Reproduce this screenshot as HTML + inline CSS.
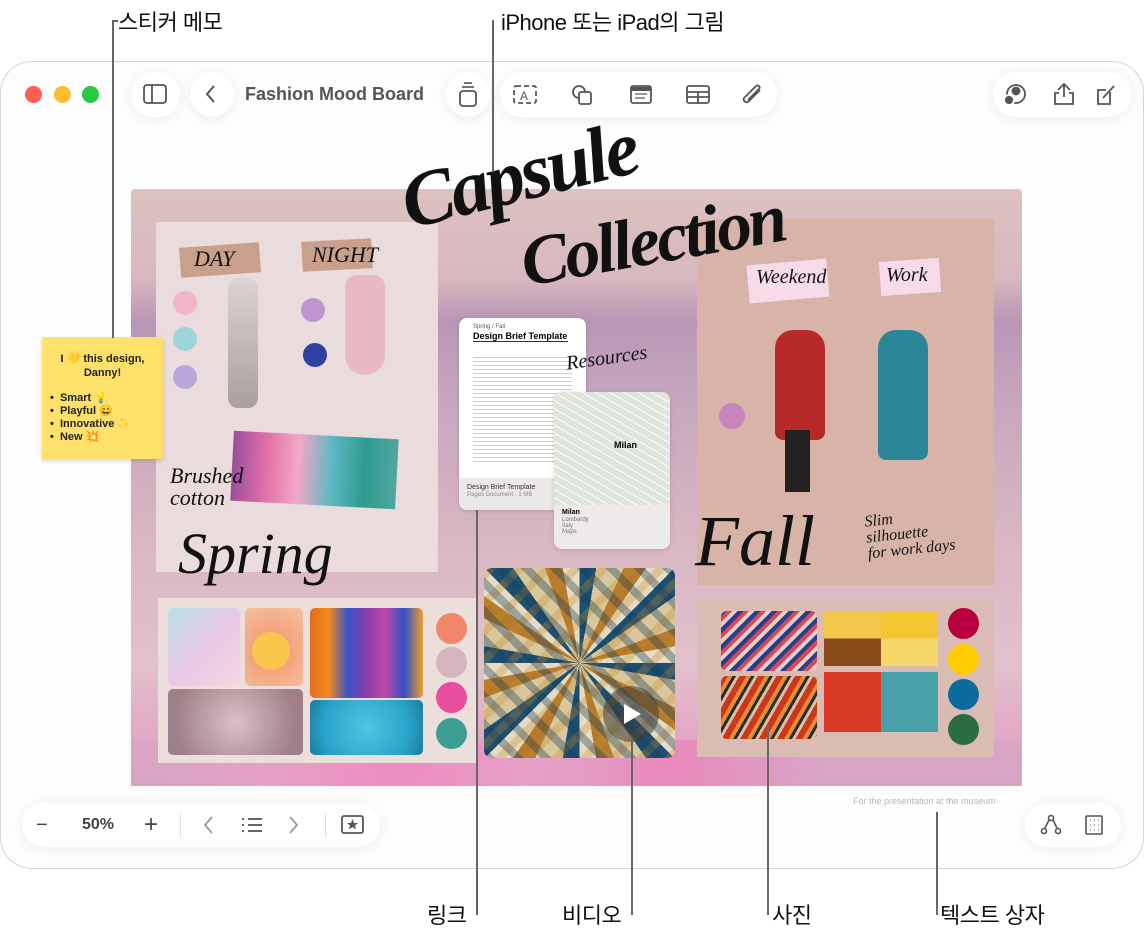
<!DOCTYPE html>
<html><head><meta charset="utf-8"><style>
*{margin:0;padding:0;box-sizing:border-box}
body{width:1144px;height:936px;background:#fff;position:relative;overflow:hidden;font-family:"Liberation Sans","Noto Sans CJK KR",sans-serif}
.a{position:absolute}
.win{left:0;top:61px;width:1144px;height:808px;border:1.5px solid #d4d4d4;border-radius:32px;background:#fdfdfd}
.btn{background:#fff;border-radius:24px;box-shadow:0 2px 14px rgba(0,0,0,.07)}
.lbl{font-size:22px;color:#111;letter-spacing:-.5px}
.ln{background:#666;width:1.5px}
.hw{font-family:"Liberation Serif",serif;font-style:italic;font-weight:bold;color:#111}
.c{border-radius:50%}
svg{position:absolute}
</style></head><body>
<div class="a win"></div>
<div class="a c" style="left:25px;top:86px;width:17px;height:17px;background:#fe5f57"></div>
<div class="a c" style="left:54px;top:86px;width:17px;height:17px;background:#febc2e"></div>
<div class="a c" style="left:82px;top:86px;width:17px;height:17px;background:#28c840"></div>
<div class="a btn" style="left:131px;top:72px;width:49px;height:45px"></div>
<svg style="left:143px;top:84px" width="24" height="20"><rect x="1" y="1" width="22" height="18" rx="3" fill="none" stroke="#555" stroke-width="1.8"/><line x1="9" y1="1" x2="9" y2="19" stroke="#555" stroke-width="1.8"/></svg>
<div class="a btn" style="left:190px;top:72px;width:44px;height:45px"></div>
<svg style="left:204px;top:84px" width="14" height="20"><path d="M10 2 L3 10 L10 18" fill="none" stroke="#555" stroke-width="2"/></svg>
<div class="a" style="left:245px;top:84px;font-size:18px;font-weight:bold;color:#555">Fashion Mood Board</div>
<div class="a btn" style="left:446px;top:72px;width:44px;height:45px"></div>
<svg style="left:458px;top:81px" width="20" height="26"><line x1="6" y1="2" x2="14" y2="2" stroke="#555" stroke-width="1.6"/><line x1="4" y1="6" x2="16" y2="6" stroke="#555" stroke-width="1.6"/><rect x="2" y="10" width="16" height="15" rx="3" fill="none" stroke="#555" stroke-width="1.8"/></svg>
<div class="a btn" style="left:500px;top:72px;width:277px;height:45px"></div>
<svg style="left:512px;top:84px" width="260" height="22" fill="none" stroke="#555" stroke-width="1.8">
<rect x="2" y="2" width="22" height="17" rx="2" stroke-dasharray="5 3"/><text x="8" y="16" font-size="12" fill="#555" stroke="none" font-family="Liberation Sans">A</text>
<circle cx="67" cy="8" r="6"/><rect x="67" y="8" width="12" height="12" rx="2" fill="#fff"/>
<rect x="119" y="2" width="20" height="17" rx="2"/><line x1="119" y1="5" x2="139" y2="5" stroke-width="4"/><line x1="123" y1="10" x2="135" y2="10" stroke-width="1.2"/><line x1="123" y1="14" x2="133" y2="14" stroke-width="1.2"/>
<rect x="175" y="2" width="22" height="17" rx="2"/><line x1="175" y1="8" x2="197" y2="8"/><line x1="175" y1="13" x2="197" y2="13"/><line x1="186" y1="8" x2="186" y2="19"/>
<path d="M248 6 L236 18 a3 3 0 0 1 -4 -4 L244 2 a2 2 0 0 1 3 3 L236 16"/>
</svg>
<div class="a btn" style="left:993px;top:72px;width:138px;height:45px"></div>
<svg style="left:1002px;top:82px" width="120" height="24" fill="none" stroke="#555" stroke-width="1.8">
<circle cx="14" cy="12" r="9"/><circle cx="14" cy="9" r="3.5" fill="#555"/><circle cx="7" cy="18" r="5" fill="#555" stroke="#fff"/>
<path d="M56 8 L62 2 L68 8 M62 2 L62 15 M57 11 L53 11 L53 22 L71 22 L71 11 L67 11"/>
<path d="M108 10 L108 22 L96 22 L96 8 L104 8 M101 16 L112 4"/>
</svg>

<!-- board -->
<div class="a" style="left:131px;top:189px;width:891px;height:597px;border-radius:4px;background:linear-gradient(180deg,#dcc2c0 0%,#d8b8bf 15%,#b996b6 22%,#c6a6bd 35%,#d9b7c3 60%,#e2c0cc 80%,#e2a7c4 92%,#d598bb 100%)"></div>
<div class="a" style="left:131px;top:740px;width:891px;height:46px;background:radial-gradient(circle at 30% 50%,#f08ac0 0,#e8a0c8 20%,transparent 40%),radial-gradient(circle at 60% 50%,#ec86bb 0,transparent 30%),#d9a6c6;opacity:.9"></div>
<div class="a" style="left:156px;top:222px;width:282px;height:350px;background:#eadcdc"></div>
<div class="a" style="left:697px;top:219px;width:297px;height:366px;background:#d8b4a8"></div>
<div class="a" style="left:158px;top:598px;width:318px;height:165px;background:#ebdedb"></div>
<div class="a" style="left:697px;top:600px;width:297px;height:157px;background:#dbbcb4"></div>

<div class="a" style="left:180px;top:245px;width:80px;height:30px;background:#c9a08c;transform:rotate(-4deg)"></div>
<div class="a" style="left:302px;top:240px;width:70px;height:30px;background:#c9a08c;transform:rotate(-3deg)"></div>
<div class="a hw" style="left:194px;top:246px;font-size:22px;font-weight:normal">DAY</div>
<div class="a hw" style="left:312px;top:242px;font-size:22px;font-weight:normal">NIGHT</div>
<div class="a c" style="left:173px;top:291px;width:24px;height:24px;background:#f4b4cc"></div>
<div class="a c" style="left:173px;top:327px;width:24px;height:24px;background:#9fd4d8"></div>
<div class="a c" style="left:173px;top:365px;width:24px;height:24px;background:#b7a8d9"></div>
<div class="a c" style="left:301px;top:298px;width:24px;height:24px;background:#c094d0"></div>
<div class="a c" style="left:303px;top:343px;width:24px;height:24px;background:#2e41a0"></div>
<div class="a" style="left:228px;top:278px;width:30px;height:130px;background:linear-gradient(#d8d0d0,#9a9090);border-radius:10px;opacity:.8"></div>
<div class="a" style="left:345px;top:275px;width:40px;height:100px;background:#e8b8c4;border-radius:12px 12px 20px 20px"></div>
<div class="a" style="left:232px;top:435px;width:165px;height:70px;background:linear-gradient(90deg,#9a4d9e,#e06fa6,#f3a7c7,#5fb8c4,#2e9c8f,#4fa69e);transform:rotate(3deg)"></div>
<div class="a hw" style="left:170px;top:465px;font-size:22px;font-weight:normal;line-height:22px">Brushed<br>cotton</div>
<div class="a hw" style="left:178px;top:520px;font-size:58px;font-weight:normal">Spring</div>

<div class="a" style="left:168px;top:608px;width:72px;height:78px;border-radius:5px;background:linear-gradient(135deg,#b9e0e8,#e6c8e6,#f5d6e0)"></div>
<div class="a" style="left:245px;top:608px;width:58px;height:78px;border-radius:5px;background:radial-gradient(circle at 45% 55%,#f7c64a 0,#f7c64a 35%,#f3a37e 36%,#f5c1a0 100%)"></div>
<div class="a" style="left:310px;top:608px;width:113px;height:90px;border-radius:5px;background:linear-gradient(90deg,#e56b1e,#f08a1e,#3a55c8,#8a3ca8,#c04aa8,#2f4fc6,#f0a02e)"></div>
<div class="a" style="left:168px;top:689px;width:135px;height:66px;border-radius:5px;background:radial-gradient(circle,#d9c0c8 0,#9f8088 80%)"></div>
<div class="a" style="left:310px;top:700px;width:113px;height:55px;border-radius:5px;background:radial-gradient(circle,#4fc4e0 0,#27a2c8 70%,#1c7a9a)"></div>
<div class="a c" style="left:436px;top:613px;width:31px;height:31px;background:#f0876a"></div>
<div class="a c" style="left:436px;top:647px;width:31px;height:31px;background:#d3b5bd"></div>
<div class="a c" style="left:436px;top:682px;width:31px;height:31px;background:#e84e9d"></div>
<div class="a c" style="left:436px;top:718px;width:31px;height:31px;background:#3e9d93"></div>

<div class="a" style="left:484px;top:568px;width:191px;height:190px;border-radius:8px;background:repeating-conic-gradient(from 45deg at 50% 50%,#1d4f70 0 10deg,#d9c79e 10deg 25deg,#b57a2c 25deg 35deg,#e6dcc4 35deg 45deg);"></div>
<div class="a" style="left:484px;top:568px;width:191px;height:190px;border-radius:8px;background:repeating-linear-gradient(45deg,rgba(20,60,90,.35) 0 8px,transparent 8px 20px),repeating-linear-gradient(-45deg,rgba(200,140,40,.3) 0 8px,transparent 8px 20px)"></div>
<div class="a c" style="left:603px;top:686px;width:56px;height:56px;background:rgba(60,60,60,.55)"></div>
<svg style="left:621px;top:702px" width="22" height="24"><path d="M3 2 L20 12 L3 22Z" fill="#fff"/></svg>

<div class="a" style="left:459px;top:318px;width:127px;height:192px;background:#fff;border-radius:8px;box-shadow:0 1px 4px rgba(0,0,0,.15);overflow:hidden">
<div style="font-size:6px;color:#555;margin:6px 0 0 14px">Spring / Fall</div>
<div style="font-size:9px;font-weight:bold;margin:1px 0 0 14px;border-bottom:1px solid #333;width:95px">Design Brief Template</div>
<div style="margin:12px 14px;height:110px;background:repeating-linear-gradient(#fff 0 3px,#ccc 3px 4px)"></div>
<div style="position:absolute;top:160px;left:0;width:127px;height:32px;background:#ece8e8;font-size:7px;padding:6px 8px;color:#333">Design Brief Template<br><span style="color:#888;font-size:6px">Pages Document · 1 MB</span></div>
</div>
<div class="a" style="left:554px;top:392px;width:116px;height:157px;background:#eeeaea;border-radius:8px;box-shadow:0 1px 4px rgba(0,0,0,.15);overflow:hidden">
<div style="height:113px;background:repeating-linear-gradient(30deg,#dfe6dc 0 6px,#fff 6px 7px),#e4ebe0;opacity:.95"></div>
<div style="position:absolute;left:60px;top:48px;font-size:9px;font-weight:bold">Milan</div>
<div style="font-size:7px;font-weight:bold;padding:4px 8px 0">Milan</div>
<div style="font-size:6px;color:#777;padding:1px 8px">Lombardy<br>Italy<br>Maps</div>
</div>
<div class="a hw" style="left:566px;top:347px;font-size:20px;font-weight:normal;transform:rotate(-8deg)">Resources</div>

<div class="a" style="left:748px;top:262px;width:80px;height:38px;background:#f7dbe8;transform:rotate(-5deg)"></div>
<div class="a" style="left:880px;top:260px;width:60px;height:34px;background:#f7dbe8;transform:rotate(-4deg)"></div>
<div class="a hw" style="left:756px;top:266px;font-size:20px;font-weight:normal">Weekend</div>
<div class="a hw" style="left:886px;top:264px;font-size:20px;font-weight:normal">Work</div>
<div class="a" style="left:775px;top:330px;width:50px;height:110px;background:#b82a2a;border-radius:18px 18px 8px 8px"></div>
<div class="a" style="left:785px;top:430px;width:25px;height:62px;background:#222"></div>
<div class="a" style="left:878px;top:330px;width:50px;height:130px;background:#2b8798;border-radius:18px 18px 8px 8px"></div>
<div class="a c" style="left:719px;top:403px;width:26px;height:26px;background:#c885bd"></div>
<div class="a hw" style="left:695px;top:500px;font-size:72px;font-weight:normal">Fall</div>
<div class="a hw" style="left:866px;top:510px;font-size:16px;font-weight:normal;line-height:16px;transform:rotate(-6deg)">Slim<br>silhouette<br>for work days</div>

<div class="a" style="left:721px;top:611px;width:96px;height:60px;border-radius:6px;background:repeating-linear-gradient(135deg,#2a3f8c 0 4px,#d34a5a 4px 8px,#e8d0c8 8px 12px)"></div>
<div class="a" style="left:721px;top:676px;width:96px;height:63px;border-radius:6px;background:repeating-linear-gradient(120deg,#c9371d 0 6px,#e98a35 6px 10px,#2a2a2a 10px 13px,#d9c0a0 13px 16px)"></div>
<div class="a" style="left:824px;top:611px;width:114px;height:55px;background:conic-gradient(#f2c531 0 25%,#f6d86a 0 50%,#8a4a1c 0 75%,#f3c84a 0)"></div>
<div class="a" style="left:824px;top:672px;width:114px;height:60px;background:linear-gradient(90deg,#d83a26 0 50%,#4aa0a8 50%)"></div>
<div class="a c" style="left:948px;top:608px;width:31px;height:31px;background:#b80041"></div>
<div class="a c" style="left:948px;top:644px;width:31px;height:31px;background:#ffcc00"></div>
<div class="a c" style="left:948px;top:679px;width:31px;height:31px;background:#0c6b9a"></div>
<div class="a c" style="left:948px;top:714px;width:31px;height:31px;background:#2a6c44"></div>

<div class="a hw" style="left:392px;top:160px;font-size:78px;transform:rotate(-14deg);letter-spacing:-3px;transform-origin:left top">Capsule</div>
<div class="a hw" style="left:515px;top:225px;font-size:70px;transform:rotate(-10deg);letter-spacing:-3px;transform-origin:left top">Collection</div>

<div class="a" style="left:42px;top:337px;width:121px;height:122px;background:#fde16a;box-shadow:0 2px 4px rgba(0,0,0,.15);font-size:11px;font-weight:bold;color:#222;padding:15px 8px">
<div style="text-align:center;line-height:14px">I 💛 this design,<br>Danny!</div>
<div style="margin-top:12px;line-height:13px">•&nbsp; Smart 💡<br>•&nbsp; Playful 😄<br>•&nbsp; Innovative ✨<br>•&nbsp; New 💥</div>
</div>

<div class="a" style="left:853px;top:796px;font-size:9px;color:#b8b8b8">For the presentation at the museum</div>

<div class="a btn" style="left:22px;top:803px;width:358px;height:44px"></div>
<div class="a" style="left:36px;top:814px;font-size:20px;color:#444">−</div>
<div class="a" style="left:82px;top:816px;font-size:16px;font-weight:bold;color:#444">50%</div>
<div class="a" style="left:144px;top:811px;font-size:24px;color:#444">+</div>
<div class="a" style="left:180px;top:813px;width:1px;height:24px;background:#ddd"></div>
<div class="a" style="left:325px;top:813px;width:1px;height:24px;background:#ddd"></div>
<svg style="left:200px;top:815px" width="110" height="20" fill="none" stroke-width="1.8"><path d="M12 2 L5 10 L12 18" stroke="#999"/><path d="M90 2 L97 10 L90 18" stroke="#999"/><g stroke="#555"><line x1="48" y1="4" x2="62" y2="4"/><line x1="48" y1="10" x2="62" y2="10"/><line x1="48" y1="16" x2="62" y2="16"/><line x1="42" y1="4" x2="44" y2="4"/><line x1="42" y1="10" x2="44" y2="10"/><line x1="42" y1="16" x2="44" y2="16"/></g></svg>
<svg style="left:341px;top:815px" width="24" height="20"><rect x="1" y="1" width="21" height="17" rx="2" fill="none" stroke="#555" stroke-width="1.8"/><path d="M11.5 4 L13 8 L17 8 L14 10.5 L15 14.5 L11.5 12 L8 14.5 L9 10.5 L6 8 L10 8Z" fill="#555"/></svg>
<div class="a btn" style="left:1025px;top:803px;width:96px;height:44px"></div>
<svg style="left:1040px;top:814px" width="70" height="22" fill="none" stroke="#555" stroke-width="1.6"><circle cx="11" cy="4" r="2.5"/><circle cx="4" cy="17" r="2.5"/><circle cx="18" cy="17" r="2.5"/><path d="M9 6 L5 14 M13 6 L17 14"/><rect x="46" y="2" width="16" height="18" rx="1"/><path d="M50 6h1M54 6h1M58 6h1M50 11h1M54 11h1M58 11h1M50 16h1M54 16h1M58 16h1" stroke-width="1"/></svg>

<div class="a lbl" style="left:118px;top:5px">스티커 메모</div>
<div class="a ln" style="left:112px;top:20px;height:318px"></div>
<div class="a ln" style="left:112px;top:20px;width:6px;height:1.5px"></div>
<div class="a lbl" style="left:501px;top:5px">iPhone 또는 iPad의 그림</div>
<div class="a ln" style="left:492px;top:20px;height:152px"></div>
<div class="a lbl" style="left:427px;top:898px">링크</div>
<div class="a ln" style="left:476px;top:510px;height:405px"></div>
<div class="a lbl" style="left:562px;top:898px">비디오</div>
<div class="a ln" style="left:631px;top:740px;height:175px"></div>
<div class="a lbl" style="left:772px;top:898px">사진</div>
<div class="a ln" style="left:767px;top:727px;height:188px"></div>
<div class="a lbl" style="left:940px;top:898px">텍스트 상자</div>
<div class="a ln" style="left:936px;top:812px;height:103px"></div>
</body></html>
